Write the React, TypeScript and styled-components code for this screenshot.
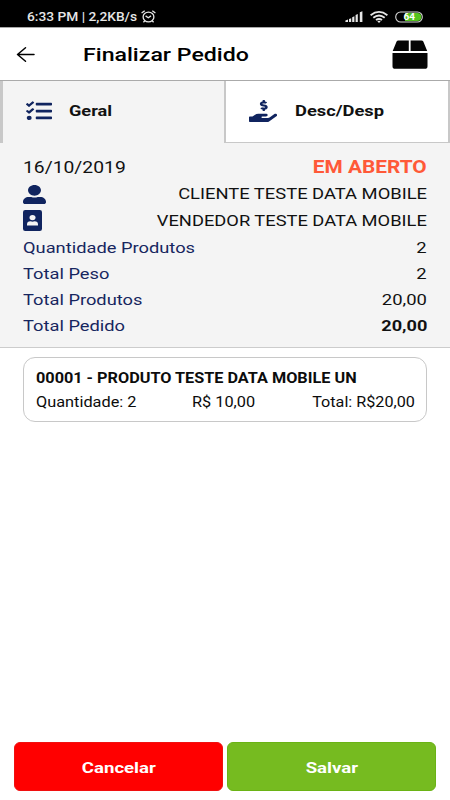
import React from 'react';
import styled, { createGlobalStyle } from 'styled-components';
import { FaTasks, FaHandHoldingUsd, FaUserAlt } from 'react-icons/fa';

const GlobalStyle = createGlobalStyle`
  * { box-sizing: border-box; }
  body { margin: 0; background: #fff; font-family: Roboto, sans-serif; color: #111; }
`;

const Screen = styled.div`
  width: 450px;
  height: 800px;
  display: flex;
  flex-direction: column;
  background: #fff;
  overflow: hidden;
`;

/* Wide-set label; the glyphs are stretched horizontally from the given side. */
const Label = styled.span<{
  $size: number;
  $stretch: number;
  $bold?: boolean;
  $medium?: boolean;
  $color?: string;
  $from?: 'left' | 'right' | 'center';
}>`
  display: inline-block;
  flex: none;
  white-space: nowrap;
  font-size: ${(p) => p.$size}px;
  font-weight: ${(p) => (p.$bold ? 700 : p.$medium ? 500 : 400)};
  color: ${(p) => p.$color ?? 'inherit'};
  transform: scaleX(${(p) => p.$stretch});
  transform-origin: ${(p) => p.$from ?? 'left'} center;
`;

const StatusBar = styled.div`
  height: 28px;
  flex: none;
  display: flex;
  justify-content: space-between;
  align-items: center;
  padding: 6px 27px 0;
  background: #000;
  color: #e6e6e6;
  border-bottom: 1px solid #a8a8a8;
`;

const StatusLeft = styled.div`
  width: 129px;
  display: flex;
  align-items: center;
  justify-content: space-between;
`;

const StatusIcons = styled.div`
  display: flex;
  align-items: center;
  gap: 7px;
`;

const Header = styled.header`
  height: 52px;
  flex: none;
  display: flex;
  align-items: center;
  padding: 0 22px 0 16px;
  color: #000;
`;

const HeaderTitle = styled.div`
  flex: 1;
  padding: 1px 0 0 47px;
`;

const Tabs = styled.nav`
  height: 63px;
  flex: none;
  display: flex;
  border-top: 1px solid #aaa;
  background: #f4f4f4;
`;

const Tab = styled.div<{ $active?: boolean }>`
  width: 225px;
  display: grid;
  grid-template-columns: ${(p) => (p.$active ? '43px' : '46px')} 1fr;
  align-items: center;
  padding: 0 0 2px 23px;
  color: #111;
  background: ${(p) => (p.$active ? '#f4f4f4' : '#fff')};
  border-style: solid;
  border-color: #c8c8c8;
  border-width: ${(p) => (p.$active ? '0 1px 0 3px' : '0 2px 1px 1px')};
`;

const Glyph = styled.span<{ $w: number; $h: number }>`
  display: flex;
  color: #10245f;

  svg {
    width: ${(p) => p.$w}px;
    height: ${(p) => p.$h}px;
  }
`;

const Summary = styled.section`
  height: 205px;
  flex: none;
  display: flex;
  flex-direction: column;
  padding: 11px 23px 0;
  background: #f4f4f4;
  border-bottom: 1px solid #ccc;
`;

const SummaryRow = styled.div<{ $height?: number }>`
  height: ${(p) => p.$height ?? 26}px;
  display: flex;
  justify-content: space-between;
  align-items: center;
`;

const Totals = styled.div`
  padding-top: 2px;
`;

const Items = styled.main`
  flex: 1;
  padding: 9px 23px;
`;

const Card = styled.article`
  height: 65px;
  border: 1px solid #c8c8c8;
  border-radius: 12px;
  padding: 8px 11px 0 12px;
  color: #0c0c0c;
`;

const CardLine = styled.div`
  height: 24px;
  display: grid;
  grid-template-columns: 156px 1fr auto;
  align-items: center;
`;

const CardTitle = styled(CardLine)`
  grid-template-columns: 1fr;
`;

const Actions = styled.footer`
  flex: none;
  display: grid;
  grid-template-columns: 209px 209px;
  gap: 4px;
  padding: 0 14px 9px;
`;

const Button = styled.button<{ $bg: string; $edge: string }>`
  height: 49px;
  padding: 2px 0 0;
  border: 1px solid ${(p) => p.$edge};
  border-radius: 6px;
  background: ${(p) => p.$bg};
  color: #fff;
  font-family: inherit;
`;

const AlarmIcon = () => (
  <svg width="15" height="13" viewBox="0 0 15 13" fill="none" stroke="#e8e8e8" strokeWidth="1.3">
    <ellipse cx="7.5" cy="7" rx="5.4" ry="4.9" />
    <path d="M4.6 5.9 7.3 7.7 10 5.9M.6 3 3.7.8M14.4 3 11.3.8M3.7 11l-1.3 1.3M11.3 11l1.3 1.3" />
  </svg>
);

const SignalIcon = () => (
  <svg width="18" height="11" viewBox="0 0 18 11" fill="#e6e6e6">
    <path d="M.4 11V9.6L3 8.6V11zM4 11V8.1l2.2-.9V11zM7.2 11V6.3l2.2-1V11zM10.6 11V4l2.2-.9V11zM14.8 11V1.2l2.6-1V11z" />
  </svg>
);

const WifiIcon = () => (
  <svg width="18" height="12" viewBox="0 0 18 12" fill="none" stroke="#e6e6e6" strokeWidth="1.8">
    <path d="M.6 4.2Q9-2.3 17.4 4.2M3.3 6.8Q9 2.2 14.7 6.8M6 9.1Q9 6.9 12 9.1" />
    <path d="M7.3 10.2 9 11.9 10.7 10.2Q9 9.2 7.3 10.2z" fill="#e6e6e6" stroke="none" />
  </svg>
);

const BatteryIcon = () => (
  <svg width="28" height="12" viewBox="0 0 28 12">
    <rect x=".7" y="1" width="26.6" height="10" rx="5" fill="#000" stroke="#d8d8d8" strokeWidth="1.1" />
    <path d="M10 2h12.3a4 4 0 0 1 0 8H10z" fill="#55c31e" />
    <text x="8.5" y="9.4" fontFamily="Roboto, sans-serif" fontSize="9.5" fontWeight="700" fill="#fff" textLength="11.5" lengthAdjust="spacingAndGlyphs">64</text>
  </svg>
);

const BackIcon = () => (
  <svg width="20" height="17" viewBox="0 0 20 17" fill="none" stroke="#000" strokeWidth="1.5" strokeLinecap="round" strokeLinejoin="round">
    <path d="M18 8.5H1.5M9.5 1.7 1.5 8.5l8 6.8" />
  </svg>
);

const BoxIcon = () => (
  <svg width="36" height="29" viewBox="0 0 36 29" fill="#050505">
    <path d="M6.4.4H16.8V11H.7L4.6 1.5Q5 .4 6.4.4zM18.6.4H29.4Q30.8.4 31.3 1.5L35.2 11H18.6zM.5 13H35.5V26.2Q35.5 28.8 32.8 28.8H3.2Q.5 28.8.5 26.2z" />
  </svg>
);

const BadgeIcon = () => (
  <svg width="19" height="21" viewBox="0 0 19 21">
    <rect width="19" height="21" rx="2.2" fill="#10245f" />
    <ellipse cx="9.5" cy="7.6" rx="3" ry="2.7" fill="#f4f4f4" />
    <path d="M4 15.6v-1.1q0-3.2 3.5-3.2q2 .9 4 0q3.5 0 3.5 3.2v1.1z" fill="#f4f4f4" />
  </svg>
);

const NAVY = '#17265f';

const totals = [
  { name: 'Quantidade Produtos', value: '2' },
  { name: 'Total Peso', value: '2' },
  { name: 'Total Produtos', value: '20,00' },
  { name: 'Total Pedido', value: '20,00', bold: true },
];

export default function App() {
  return (
    <>
      <GlobalStyle />
      <Screen>
        <StatusBar>
          <StatusLeft>
            <Label $size={12.5} $stretch={1.1} $medium>6:33 PM | 2,2KB/s</Label>
            <AlarmIcon />
          </StatusLeft>
          <StatusIcons>
            <SignalIcon />
            <WifiIcon />
            <BatteryIcon />
          </StatusIcons>
        </StatusBar>

        <Header>
          <BackIcon />
          <HeaderTitle>
            <Label $size={18.5} $stretch={1.25} $medium>Finalizar Pedido</Label>
          </HeaderTitle>
          <BoxIcon />
        </Header>

        <Tabs>
          <Tab $active>
            <Glyph $w={26} $h={22}><FaTasks preserveAspectRatio="none" /></Glyph>
            <Label $size={15} $stretch={1.21} $bold>Geral</Label>
          </Tab>
          <Tab>
            <Glyph $w={28} $h={22}><FaHandHoldingUsd preserveAspectRatio="none" /></Glyph>
            <Label $size={15} $stretch={1.22} $bold>Desc/Desp</Label>
          </Tab>
        </Tabs>

        <Summary>
          <SummaryRow>
            <Label $size={16.5} $stretch={1.17}>16/10/2019</Label>
            <Label $size={17.5} $stretch={1.19} $bold $color="#ff5938" $from="right">EM ABERTO</Label>
          </SummaryRow>
          <SummaryRow $height={28}>
            <Glyph $w={23} $h={19}><FaUserAlt preserveAspectRatio="none" /></Glyph>
            <Label $size={15.5} $stretch={1.185} $from="right">CLIENTE TESTE DATA MOBILE</Label>
          </SummaryRow>
          <SummaryRow $height={25}>
            <BadgeIcon />
            <Label $size={15.5} $stretch={1.18} $from="right">VENDEDOR TESTE DATA MOBILE</Label>
          </SummaryRow>
          <Totals>
            {totals.map((t) => (
              <SummaryRow key={t.name}>
                <Label $size={15.5} $stretch={1.18} $color={NAVY}>{t.name}</Label>
                <Label $size={15.5} $stretch={t.bold ? 1.17 : 1.19} $bold={t.bold} $from="right">{t.value}</Label>
              </SummaryRow>
            ))}
          </Totals>
        </Summary>

        <Items>
          <Card>
            <CardTitle>
              <Label $size={14} $stretch={1.16} $bold>00001 - PRODUTO TESTE DATA MOBILE UN</Label>
            </CardTitle>
            <CardLine>
              <Label $size={14} $stretch={1.165}>Quantidade: 2</Label>
              <Label $size={14} $stretch={1.165}>R$ 10,00</Label>
              <Label $size={14} $stretch={1.155} $from="right">Total: R$20,00</Label>
            </CardLine>
          </Card>
        </Items>

        <Actions>
          <Button $bg="#ff0000" $edge="#f01010">
            <Label $size={15.5} $stretch={1.2} $bold $from="center">Cancelar</Label>
          </Button>
          <Button $bg="#76bb20" $edge="#6ab315">
            <Label $size={15.5} $stretch={1.2} $bold $from="center">Salvar</Label>
          </Button>
        </Actions>
      </Screen>
    </>
  );
}
